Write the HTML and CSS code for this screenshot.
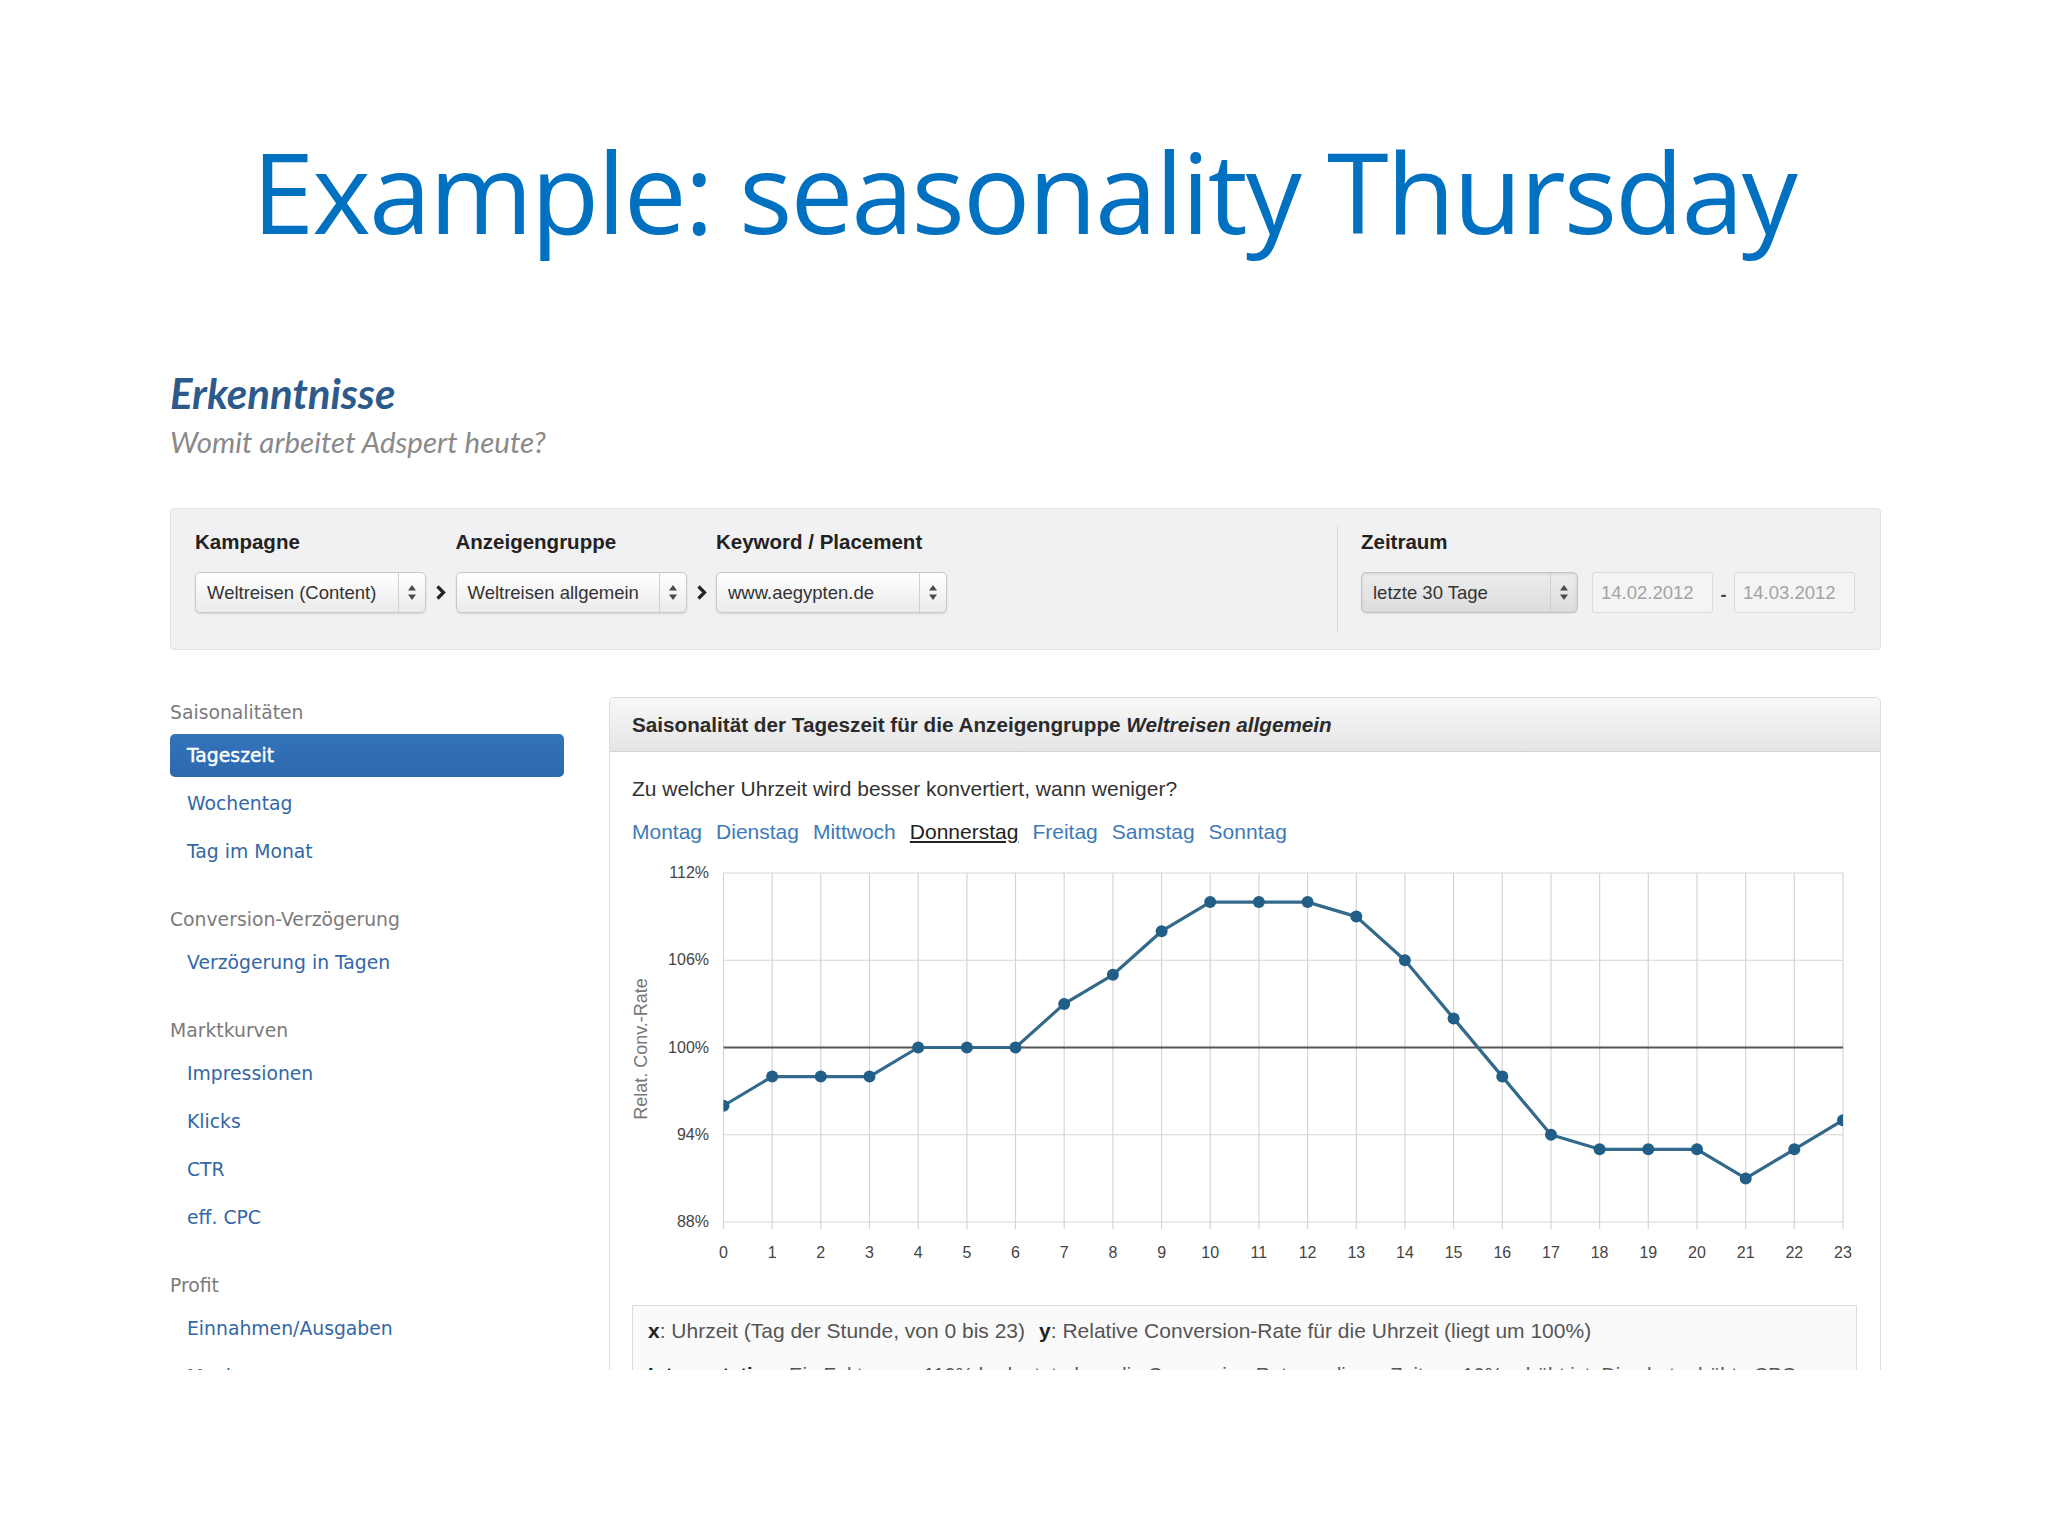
FILE: index.html
```html
<!DOCTYPE html>
<html lang="de">
<head>
<meta charset="utf-8">
<title>Example: seasonality Thursday</title>
<link rel="stylesheet" href="styles.css">
</head>
<body>
<div class="slide">
  <h1 class="slide-title">Example: seasonality Thursday</h1>

  <div class="app">
    <div class="brand-name">Erkenntnisse</div>
    <div class="brand-sub">Womit arbeitet Adspert heute?</div>

    <div class="filters">
      <div class="filter-row">
        <div class="filter">
          <div class="filter-label">Kampagne</div>
          <div class="select"><span class="select-text">Weltreisen (Content)</span><span class="spin"><svg width="8" height="15" viewBox="0 0 8 15"><path d="M4 0 L8 5.5 L0 5.5 Z M0 9.5 L8 9.5 L4 15 Z" fill="#4a4a4a"/></svg></span></div>
        </div>
        <span class="chev"><svg width="11" height="15" viewBox="0 0 11 15"><path d="M2.5 1.5 L8.5 7.5 L2.5 13.5" fill="none" stroke="#222" stroke-width="3.2"/></svg></span>
        <div class="filter">
          <div class="filter-label">Anzeigengruppe</div>
          <div class="select"><span class="select-text">Weltreisen allgemein</span><span class="spin"><svg width="8" height="15" viewBox="0 0 8 15"><path d="M4 0 L8 5.5 L0 5.5 Z M0 9.5 L8 9.5 L4 15 Z" fill="#4a4a4a"/></svg></span></div>
        </div>
        <span class="chev"><svg width="11" height="15" viewBox="0 0 11 15"><path d="M2.5 1.5 L8.5 7.5 L2.5 13.5" fill="none" stroke="#222" stroke-width="3.2"/></svg></span>
        <div class="filter">
          <div class="filter-label">Keyword / Placement</div>
          <div class="select"><span class="select-text">www.aegypten.de</span><span class="spin"><svg width="8" height="15" viewBox="0 0 8 15"><path d="M4 0 L8 5.5 L0 5.5 Z M0 9.5 L8 9.5 L4 15 Z" fill="#4a4a4a"/></svg></span></div>
        </div>
      </div>

      <div class="filters-right">
        <div class="divider"></div>
        <div class="filter">
          <div class="filter-label">Zeitraum</div>
          <div class="filter-row">
            <div class="select select-range"><span class="select-text">letzte 30 Tage</span><span class="spin"><svg width="8" height="15" viewBox="0 0 8 15"><path d="M4 0 L8 5.5 L0 5.5 Z M0 9.5 L8 9.5 L4 15 Z" fill="#4a4a4a"/></svg></span></div>
            <div class="date">14.02.2012</div>
            <span class="dash">-</span>
            <div class="date">14.03.2012</div>
          </div>
        </div>
      </div>
    </div>

    <div class="main">
      <nav class="sidebar">
        <div class="side-group">
          <div class="side-head">Saisonalitäten</div>
          <a class="side-item active">Tageszeit</a>
          <a class="side-item">Wochentag</a>
          <a class="side-item">Tag im Monat</a>
        </div>
        <div class="side-group">
          <div class="side-head">Conversion-Verzögerung</div>
          <a class="side-item">Verzögerung in Tagen</a>
        </div>
        <div class="side-group">
          <div class="side-head">Marktkurven</div>
          <a class="side-item">Impressionen</a>
          <a class="side-item">Klicks</a>
          <a class="side-item">CTR</a>
          <a class="side-item">eff. CPC</a>
        </div>
        <div class="side-group">
          <div class="side-head">Profit</div>
          <a class="side-item">Einnahmen/Ausgaben</a>
          <a class="side-item">Maximum</a>
        </div>
      </nav>

      <section class="panel">
        <div class="panel-head">Saisonalität der Tageszeit für die Anzeigengruppe <em>Weltreisen allgemein</em></div>
        <div class="panel-body">
          <p class="question">Zu welcher Uhrzeit wird besser konvertiert, wann weniger?</p>
          <div class="days">
            <a>Montag</a><a>Dienstag</a><a>Mittwoch</a><a class="current">Donnerstag</a><a>Freitag</a><a>Samstag</a><a>Sonntag</a>
          </div>
          <svg class="chart" width="1224" height="420" viewBox="0 0 1224 420">
            <defs>
              <clipPath id="plot"><rect x="91.5" y="0" width="1119.5" height="400"/></clipPath>
            </defs>
            <g stroke="#d5d5d5" stroke-width="1.2">
              <line x1="91.5" y1="22" x2="1211" y2="22"/>
              <line x1="91.5" y1="109.25" x2="1211" y2="109.25"/>
              <line x1="91.5" y1="283.75" x2="1211" y2="283.75"/>
              <line x1="91.5" y1="371" x2="1211" y2="371"/>
              <line x1="91.5" y1="22" x2="91.5" y2="378"/>
              <line x1="140.2" y1="22" x2="140.2" y2="378"/>
              <line x1="188.8" y1="22" x2="188.8" y2="378"/>
              <line x1="237.5" y1="22" x2="237.5" y2="378"/>
              <line x1="286.2" y1="22" x2="286.2" y2="378"/>
              <line x1="334.9" y1="22" x2="334.9" y2="378"/>
              <line x1="383.5" y1="22" x2="383.5" y2="378"/>
              <line x1="432.2" y1="22" x2="432.2" y2="378"/>
              <line x1="480.9" y1="22" x2="480.9" y2="378"/>
              <line x1="529.6" y1="22" x2="529.6" y2="378"/>
              <line x1="578.2" y1="22" x2="578.2" y2="378"/>
              <line x1="626.9" y1="22" x2="626.9" y2="378"/>
              <line x1="675.6" y1="22" x2="675.6" y2="378"/>
              <line x1="724.3" y1="22" x2="724.3" y2="378"/>
              <line x1="772.9" y1="22" x2="772.9" y2="378"/>
              <line x1="821.6" y1="22" x2="821.6" y2="378"/>
              <line x1="870.3" y1="22" x2="870.3" y2="378"/>
              <line x1="919" y1="22" x2="919" y2="378"/>
              <line x1="967.6" y1="22" x2="967.6" y2="378"/>
              <line x1="1016.3" y1="22" x2="1016.3" y2="378"/>
              <line x1="1065" y1="22" x2="1065" y2="378"/>
              <line x1="1113.7" y1="22" x2="1113.7" y2="378"/>
              <line x1="1162.3" y1="22" x2="1162.3" y2="378"/>
              <line x1="1211" y1="22" x2="1211" y2="378"/>
            </g>
            <line x1="91.5" y1="196.5" x2="1211" y2="196.5" stroke="#555" stroke-width="1.8"/>
            <g class="axis-y" text-anchor="end">
              <text x="77" y="27">112%</text>
              <text x="77" y="114">106%</text>
              <text x="77" y="202">100%</text>
              <text x="77" y="289">94%</text>
              <text x="77" y="376">88%</text>
            </g>
            <g class="axis-x" text-anchor="middle">
              <text x="91.5" y="407">0</text>
              <text x="140.2" y="407">1</text>
              <text x="188.8" y="407">2</text>
              <text x="237.5" y="407">3</text>
              <text x="286.2" y="407">4</text>
              <text x="334.9" y="407">5</text>
              <text x="383.5" y="407">6</text>
              <text x="432.2" y="407">7</text>
              <text x="480.9" y="407">8</text>
              <text x="529.6" y="407">9</text>
              <text x="578.2" y="407">10</text>
              <text x="626.9" y="407">11</text>
              <text x="675.6" y="407">12</text>
              <text x="724.3" y="407">13</text>
              <text x="772.9" y="407">14</text>
              <text x="821.6" y="407">15</text>
              <text x="870.3" y="407">16</text>
              <text x="919" y="407">17</text>
              <text x="967.6" y="407">18</text>
              <text x="1016.3" y="407">19</text>
              <text x="1065" y="407">20</text>
              <text x="1113.7" y="407">21</text>
              <text x="1162.3" y="407">22</text>
              <text x="1211" y="407">23</text>
            </g>
            <text class="axis-title" x="15" y="198" text-anchor="middle" transform="rotate(-90 15 198)">Relat. Conv.-Rate</text>
            <g clip-path="url(#plot)">
              <polyline fill="none" stroke="#33698a" stroke-width="3.2" stroke-linejoin="round" points="91.5,254.7 140.2,225.6 188.8,225.6 237.5,225.6 286.2,196.5 334.9,196.5 383.5,196.5 432.2,152.9 480.9,123.8 529.6,80.2 578.2,51.1 626.9,51.1 675.6,51.1 724.3,65.6 772.9,109.3 821.6,167.4 870.3,225.6 919,283.8 967.6,298.3 1016.3,298.3 1065,298.3 1113.7,327.4 1162.3,298.3 1211,269.2"/>
              <g fill="#215f88">
                <circle cx="91.5" cy="254.7" r="6"/>
                <circle cx="140.2" cy="225.6" r="6"/>
                <circle cx="188.8" cy="225.6" r="6"/>
                <circle cx="237.5" cy="225.6" r="6"/>
                <circle cx="286.2" cy="196.5" r="6"/>
                <circle cx="334.9" cy="196.5" r="6"/>
                <circle cx="383.5" cy="196.5" r="6"/>
                <circle cx="432.2" cy="152.9" r="6"/>
                <circle cx="480.9" cy="123.8" r="6"/>
                <circle cx="529.6" cy="80.2" r="6"/>
                <circle cx="578.2" cy="51.1" r="6"/>
                <circle cx="626.9" cy="51.1" r="6"/>
                <circle cx="675.6" cy="51.1" r="6"/>
                <circle cx="724.3" cy="65.6" r="6"/>
                <circle cx="772.9" cy="109.3" r="6"/>
                <circle cx="821.6" cy="167.4" r="6"/>
                <circle cx="870.3" cy="225.6" r="6"/>
                <circle cx="919" cy="283.8" r="6"/>
                <circle cx="967.6" cy="298.3" r="6"/>
                <circle cx="1016.3" cy="298.3" r="6"/>
                <circle cx="1065" cy="298.3" r="6"/>
                <circle cx="1113.7" cy="327.4" r="6"/>
                <circle cx="1162.3" cy="298.3" r="6"/>
                <circle cx="1211" cy="269.2" r="6"/>
              </g>
            </g>
          </svg>
          <div class="legend">
            <p><b>x</b>: Uhrzeit (Tag der Stunde, von 0 bis 23)<span class="gap"></span><b>y</b>: Relative Conversion-Rate für die Uhrzeit (liegt um 100%)</p>
            <p class="second"><b>Interpretation:</b> Ein Faktor von 110% bedeutet, dass die Conversion-Rate zu dieser Zeit um 10% erhöht ist. Dies hat erhöhte CPC</p>
          </div>
        </div>
      </section>
    </div>
  </div>
</div>
</body>
</html>
```

FILE: styles.css
```css
* { box-sizing: border-box; }

html, body {
  margin: 0;
  padding: 0;
  background: #ffffff;
}

.slide {
  width: 2048px;
  height: 1536px;
  overflow: hidden;
  background: #ffffff;
}

.slide-title {
  margin: 0;
  padding-top: 124px;
  font-family: "Open Sans", "Noto Sans", sans-serif;
  font-weight: 400;
  font-size: 112px;
  line-height: 134px;
  letter-spacing: -2px;
  color: #0070c0;
  text-align: center;
}

.app {
  margin: 111px 0 0 170px;
  width: 1711px;
  height: 1001px;
  overflow: hidden;
  font-family: "Liberation Sans", Arial, sans-serif;
  color: #333;
}

.brand-name {
  font-family: Lato, "Open Sans", sans-serif;
  font-weight: 700;
  font-style: italic;
  font-size: 42px;
  line-height: 48px;
  color: #2b5a8b;
}

.brand-sub {
  margin-top: 7px;
  font-family: Lato, "Open Sans", sans-serif;
  font-style: italic;
  font-size: 29.5px;
  line-height: 36px;
  color: #8a8a8a;
}

/* ---------- filter bar ---------- */
.filters {
  margin-top: 48px;
  height: 142px;
  display: flex;
  padding: 17px 25px 17px 24px;
  background: #f1f1f3;
  border: 1px solid #e2e2e5;
  border-radius: 4px;
}

.filter-row {
  display: flex;
  align-items: flex-end;
}

.filter {
  padding: 4px 0 19px;
}

.filter-label {
  font-weight: 700;
  font-size: 20.5px;
  line-height: 24px;
  color: #222;
  margin-bottom: 18px;
  white-space: nowrap;
}

.select {
  display: flex;
  width: 231px;
  height: 41px;
  border: 1px solid #c9c9cb;
  border-radius: 5px;
  background: linear-gradient(#ffffff, #ebebeb);
  box-shadow: 0 1px 2px rgba(0, 0, 0, 0.12);
}

.select-text {
  flex: 1;
  padding-left: 11px;
  font-size: 18.5px;
  line-height: 39px;
  color: #333;
  white-space: nowrap;
  overflow: hidden;
}

.spin {
  width: 27px;
  display: flex;
  align-items: center;
  justify-content: center;
  border-left: 1px solid #d0d0d2;
}

.chev {
  width: 29.5px;
  height: 41px;
  display: flex;
  align-items: center;
  justify-content: center;
  margin-bottom: 19px;
}

.filters-right {
  margin-left: auto;
  display: flex;
}

.divider {
  width: 1px;
  background: #d9d9db;
  margin-right: 23px;
}

.select-range {
  width: 217px;
  background: linear-gradient(#ededed, #dcdcdc);
  border-color: #c4c4c6;
  box-shadow: inset 0 1px 3px rgba(0, 0, 0, 0.12), 0 1px 1px rgba(0, 0, 0, 0.08);
}

.date {
  margin-left: 14px;
  width: 121px;
  height: 41px;
  padding-left: 8px;
  border: 1px solid #dadadc;
  border-radius: 3px;
  background: #f4f4f5;
  font-size: 18.5px;
  line-height: 39px;
  color: #a3a3a3;
}

.dash {
  width: 21px;
  height: 41px;
  line-height: 47px;
  text-align: center;
  font-size: 18px;
  font-weight: 700;
  color: #444;
}

.filter-row .date + .dash + .date { margin-left: 0; }

/* ---------- main ---------- */
.main {
  display: flex;
  gap: 45px;
  margin-top: 45px;
}

.sidebar {
  width: 394px;
  flex: none;
  padding-top: 3px;
  font-family: "DejaVu Sans", Verdana, sans-serif;
  font-size: 18.8px;
}

.side-group + .side-group {
  margin-top: 32px;
}

.side-head {
  height: 30px;
  line-height: 30px;
  margin-bottom: 6px;
  color: #7b7b7b;
  white-space: nowrap;
}

.side-item {
  display: block;
  height: 43px;
  line-height: 43px;
  padding-left: 17px;
  margin-bottom: 5px;
  border-radius: 5px;
  color: #3467a5;
  white-space: nowrap;
}

.side-item.active {
  background: linear-gradient(#3474bb, #2c68ad);
  color: #fff;
  -webkit-text-stroke: 0.4px #fff;
}

.panel {
  flex: 1;
  min-width: 0;
  margin-top: 2px;
  border: 1px solid #dcdcde;
  border-radius: 5px 5px 0 0;
  background: #fff;
}

.panel-head {
  height: 54px;
  padding-left: 22px;
  line-height: 53px;
  border-bottom: 1px solid #d3d3d5;
  border-radius: 5px 5px 0 0;
  background: linear-gradient(#f8f8f8, #e5e5e7);
  font-weight: 700;
  font-size: 20.7px;
  color: #2b2b2b;
  white-space: nowrap;
  overflow: hidden;
}

.panel-head em {
  font-style: italic;
}

.panel-body {
  padding: 24px 23px 0 22px;
}

.question {
  margin: 0 0 17px;
  font-size: 21px;
  line-height: 26px;
  color: #333;
}

.days {
  display: flex;
  gap: 14px;
  margin-bottom: 6px;
  font-size: 21px;
  line-height: 26px;
  color: #3d7ab7;
}

.days .current {
  color: #222;
  text-decoration: underline;
}

.chart {
  display: block;
}

.axis-y text,
.axis-x text {
  font-family: "Liberation Sans", Arial, sans-serif;
  font-size: 16px;
  fill: #444;
}

.axis-title {
  font-family: "Liberation Sans", Arial, sans-serif;
  font-size: 18px;
  fill: #777;
}

.legend {
  margin-top: 34px;
  padding: 13px 15px;
  border: 1px solid #dcdcde;
  background: #fafafa;
  font-size: 21px;
  line-height: 24px;
  color: #555;
  overflow: hidden;
}

.legend p {
  margin: 0;
  white-space: nowrap;
}

.legend b {
  color: #222;
}

.legend .gap {
  display: inline-block;
  width: 14px;
}

.legend .second {
  margin-top: 20px;
  font-size: 20px;
}
```
